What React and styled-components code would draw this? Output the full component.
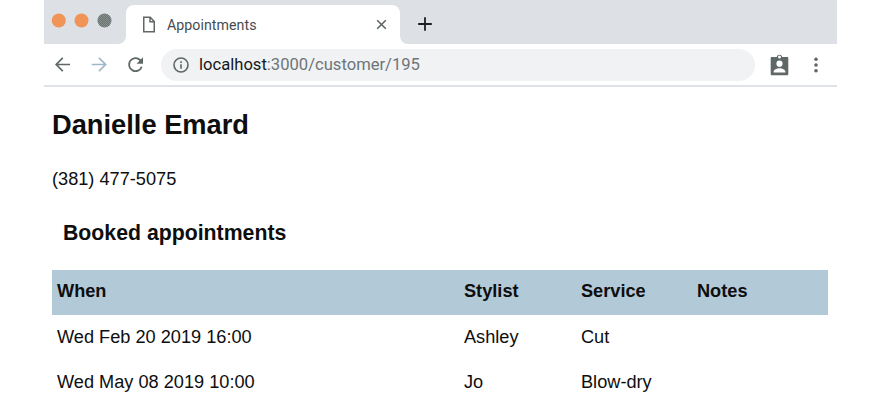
import React from 'react';
import styled, { createGlobalStyle } from 'styled-components';

const GlobalStyle = createGlobalStyle`
  * { box-sizing: border-box; }
  body {
    margin: 0;
    background: #fff;
    color: #0e0e0e;
    font-family: "Liberation Sans", Helvetica, Arial, sans-serif;
    overflow: hidden;
  }
`;

const Window = styled.div`
  width: 793px;
  height: 417px;
  margin-left: 44px;
  overflow: hidden;
`;

const TabStrip = styled.div`
  display: flex;
  height: 44px;
`;

const WindowControls = styled.div`
  display: flex;
  gap: 8px;
  width: 82px;
  padding: 13px 0 0 7px;
  background: #dde0e5;
  border-bottom-right-radius: 8px;
`;

const Light = styled.svg`
  width: 15px;
  height: 15px;
  flex: none;
`;

const TabHolder = styled.div`
  width: 274px;
  padding-top: 5px;
  background: #dde0e5;
`;

const Tab = styled.div`
  display: flex;
  align-items: center;
  height: 39px;
  padding: 0 12px 0 16px;
  border-radius: 8px 8px 0 0;
  background: #fff;
`;

const TabTitle = styled.span`
  flex: 1;
  margin-left: 11px;
  font: 14.2px/20px Roboto, sans-serif;
  letter-spacing: 0.05px;
  color: #464b4e;
`;

const StripRest = styled.div`
  flex: 1;
  padding: 17px 0 0 18px;
  background: #dde0e5;
  border-bottom-left-radius: 8px;
`;

const Toolbar = styled.div`
  display: flex;
  align-items: center;
  height: 43px;
  padding: 0 12px 0 10px;
  border-bottom: 2px solid #dfe3e7;
`;

const Icon = styled.svg`
  display: block;
  flex: none;
  width: ${(p) => p.$w}px;
  height: ${(p) => p.$h || p.$w}px;
  margin-left: ${(p) => p.$left || 0}px;
  color: ${(p) => p.$color || '#5f6866'};
`;

const AddressBar = styled.div`
  display: flex;
  align-items: center;
  width: 594px;
  height: 32px;
  margin-left: 17px;
  padding-left: 12px;
  border-radius: 16px;
  background: #f0f2f4;
`;

const Url = styled.span`
  margin-left: 10px;
  font: 16.6px/20px Roboto, sans-serif;
  color: #6d7579;
`;

const Host = styled.span`
  color: #15181a;
`;

const Page = styled.main`
  padding: 22px 9px 0 8px;
  font-size: 18.18px;
  line-height: 22px;
`;

const CustomerName = styled.h2`
  margin: 0;
  font-size: 27.27px;
  line-height: 32px;
`;

const Phone = styled.p`
  margin: 27px 0 0;
`;

const SectionTitle = styled.h3`
  margin: 30px 0 0 11px;
  font-size: 21.27px;
  line-height: 26px;
`;

const Table = styled.table`
  width: 776px;
  margin-top: 24px;
  border-collapse: collapse;
  table-layout: fixed;
  text-align: left;
`;

const Col = styled.col`
  width: ${(p) => p.$w}px;
`;

const HeadRow = styled.tr`
  height: 45px;
  background: #b2c9d8;
`;

const Row = styled.tr`
  height: 45px;
`;

const HeadCell = styled.th`
  padding: 0 5px 3px;
`;

const Cell = styled.td`
  padding: 0 5px 1px;
`;

const appointments = [
  { when: 'Wed Feb 20 2019 16:00', stylist: 'Ashley', service: 'Cut', notes: '' },
  { when: 'Wed May 08 2019 10:00', stylist: 'Jo', service: 'Blow-dry', notes: '' },
];

function TrafficLights() {
  return (
    <WindowControls>
      <Light viewBox="0 0 15 15"><circle cx="7.8" cy="7.5" r="7" fill="#f09557" /></Light>
      <Light viewBox="0 0 15 15"><circle cx="7.5" cy="7.5" r="7" fill="#f09557" /></Light>
      <Light viewBox="0 0 15 15">
        <defs>
          <pattern id="weave" width="2" height="2" patternUnits="userSpaceOnUse">
            <rect width="2" height="2" fill="#69736f" />
            <rect width="1" height="1" fill="#88908e" />
            <rect x="1" y="1" width="1" height="1" fill="#88908e" />
          </pattern>
        </defs>
        <circle cx="7.5" cy="7.5" r="7" fill="url(#weave)" />
      </Light>
    </WindowControls>
  );
}

export default function App() {
  return (
    <>
      <GlobalStyle />
      <Window>
        <TabStrip>
          <TrafficLights />
          <TabHolder>
            <Tab>
              <Icon $w={14} $h={17} viewBox="0 0 14 17" fill="none" stroke="currentColor" strokeWidth="1.5">
                <path d="M1.75 1.25h6.5l4 4.2v10.3H1.75zM8 1.25v4.5h4.25" />
              </Icon>
              <TabTitle>Appointments</TabTitle>
              <Icon $w={13} viewBox="0 0 13 13" fill="none" stroke="currentColor" strokeWidth="1.6">
                <path d="M2.2 2.2l8.6 8.6M10.8 2.2l-8.6 8.600" />
              </Icon>
            </Tab>
          </TabHolder>
          <StripRest>
            <Icon $w={14} $color="#1c1f20" viewBox="0 0 14 14" fill="none" stroke="currentColor" strokeWidth="1.8">
              <path d="M7 .2v13.6M.2 7h13.6" />
            </Icon>
          </StripRest>
        </TabStrip>
        <Toolbar>
          <Icon $w={17} viewBox="0 0 17 17" fill="none" stroke="currentColor" strokeWidth="1.7">
            <path d="M16 8.5H2.200M8.800 1.900L2.200 8.500l6.600 6.600" />
          </Icon>
          <Icon $w={17} $left={20} $color="#9fb8c9" viewBox="0 0 17 17" fill="none" stroke="currentColor" strokeWidth="1.700">
            <path d="M.8 8.500h13.500M8 1.900l6.600 6.600L8 15.100" />
          </Icon>
          <Icon $w={17} $left={19} viewBox="0 0 17 17" fill="none" stroke="currentColor" strokeWidth="1.800">
            <path d="M14.700 10.700A6.500 6.500 0 1 1 13.100 4L15 5.900" />
            <path d="M16 1.200v6.500H9.500z" fill="currentColor" stroke="none" />
          </Icon>
          <AddressBar>
            <Icon $w={16} viewBox="0 0 16 16" fill="none" stroke="currentColor" strokeWidth="1.600">
              <circle cx="8" cy="8" r="7" />
              <path d="M8 7.200v4.500M8 4.200v1.700" />
            </Icon>
            <Url><Host>localhost</Host>:3000/customer/195</Url>
          </AddressBar>
          <Icon $w={19} $h={22} $left={15} viewBox="0 0 19 22">
            <path fill="currentColor" d="M2 3h4.700a2.850 2.850 0 0 1 5.600 0H17c.8 0 1.300.5 1.300 1.300v15.700c0 .8-.5 1.300-1.300 1.300H2c-.8 0-1.300-.5-1.300-1.300V4.300C.7 3.500 1.200 3 2 3z" />
            <circle cx="9.500" cy="3" r="1.500" fill="#fff" />
            <circle cx="9.500" cy="9.700" r="3.100" fill="#fff" />
            <path fill="#fff" d="M3.600 18.500v-.8c0-2.300 3.500-3.500 5.900-3.500s5.900 1.200 5.900 3.500v.8z" />
          </Icon>
          <Icon $w={4} $h={16} $left={25} viewBox="0 0 4 16" fill="currentColor">
            <circle cx="2" cy="2.300" r="1.800" />
            <circle cx="2" cy="8" r="1.800" />
            <circle cx="2" cy="13.700" r="1.800" />
          </Icon>
        </Toolbar>
        <Page>
          <CustomerName>Danielle Emard</CustomerName>
          <Phone>(381) 477-5075</Phone>
          <SectionTitle>Booked appointments</SectionTitle>
          <Table>
            <colgroup>
              <Col $w={407} />
              <Col $w={117} />
              <Col $w={116} />
              <Col $w={136} />
            </colgroup>
            <thead>
              <HeadRow>
                <HeadCell>When</HeadCell>
                <HeadCell>Stylist</HeadCell>
                <HeadCell>Service</HeadCell>
                <HeadCell>Notes</HeadCell>
              </HeadRow>
            </thead>
            <tbody>
              {appointments.map((a) => (
                <Row key={a.when}>
                  <Cell>{a.when}</Cell>
                  <Cell>{a.stylist}</Cell>
                  <Cell>{a.service}</Cell>
                  <Cell>{a.notes}</Cell>
                </Row>
              ))}
            </tbody>
          </Table>
        </Page>
      </Window>
    </>
  );
}
